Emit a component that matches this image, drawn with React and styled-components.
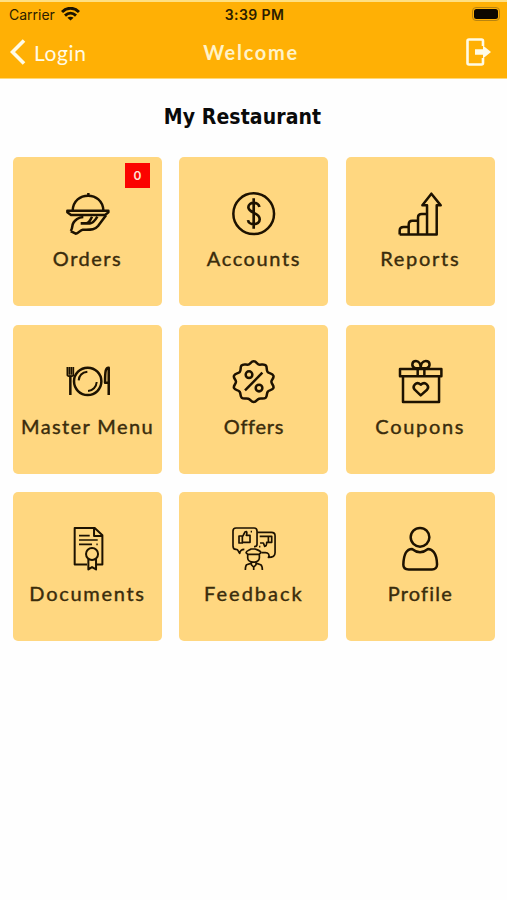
import styled, { createGlobalStyle } from 'styled-components'

const OrdersIcon = () => (
    <Icon>
        <path d="M20 56 C22 -4 110 -4 112 56" />
        <path d="M67 11 V3" />
        <path d="M4 56 H127 V61 L117 69 H15 L4 61 Z" />
        <path d="M14 117 C24 104 12 96 32 82 C40 76 46 75 52 75 M44 94 H60 C68 94 72 86 78 74 M60 94 H72 C82 94 88 84 94 74 M120 70 L96 102 C88 112 78 114 50 113 C42 114 38 124 29 125 L14 117" />
    </Icon>
)
const AccountsIcon = () => (
    <Icon>
        <circle cx="65" cy="65" r="61" />
        <path strokeWidth="8" d="M65 19 V110 M82 45 C80 29 49 28 49 46 C49 65 83 59 83 82 C83 101 50 101 48 84" />
    </Icon>
)
const ReportsIcon = () => (
    <Icon>
        <path d="M2 127 V116 C2 108 8 105 14 105 H29 M29 127 V98 C29 90 34 86 40 86 H57 M57 127 V76 C57 69 62 66 68 66 H84 M84 127 V40 H70 L97 5 L125 40 H113 V127 H2" />
    </Icon>
)
const MenuIcon = () => (
    <Icon>
        <circle cx="65" cy="64" r="41" />
        <path strokeWidth="6" d="M38 61 C39 47 49 37 64 35 M92 66 C91 81 80 92 66 93" />
        <path strokeWidth="5" d="M4 21 V45 C4 50 22 50 22 45 V21 M10 21 V44 M16 21 V44" />
        <path d="M13 46 V105 M128 105 V23 C119 22 117 32 117 68 H127" />
    </Icon>
)
const OffersIcon = () => (
    <Icon>
        <path d="M65 4 C74 4 75 14 83 14 C91 14 97 11 102 17 C106 23 102 31 107 36 C112 41 121 40 124 47 C127 54 118 59 118 65 C118 72 127 77 124 84 C121 91 111 89 107 95 C103 101 106 108 101 113 C95 118 88 114 81 116 C74 118 73 126 65 126 C57 126 56 118 49 116 C42 114 35 118 29 113 C24 108 27 101 23 95 C19 89 9 91 6 84 C3 77 12 72 12 65 C12 59 3 54 6 47 C9 40 18 41 23 36 C28 31 24 23 28 17 C33 11 39 14 47 14 C55 14 56 4 65 4 Z" />
        <circle cx="51" cy="44" r="10" />
        <circle cx="81" cy="84" r="10" />
        <path d="M91 38 L39 91" />
    </Icon>
)
const CouponsIcon = () => (
    <Icon>
        <path d="M3 27 H127 V49 H3 Z M12 49 V126 H120 V49 M56 27 V49 M76 27 V49" />
        <path d="M65 25 H50 C35 20 38 3 51 3 C59 3 65 12 65 25 C65 12 71 3 80 3 C94 3 96 20 82 25 Z" />
        <path d="M65 106 L47 89 C38 78 52 62 65 74 C79 62 93 78 84 89 Z" />
    </Icon>
)
const DocumentsIcon = () => (
    <Icon>
        <path strokeWidth="6" d="M63 112 H26 V3 H86 L109 25 V112 H92 M84 4 V27 H108" />
        <path strokeWidth="5" d="M39 26 H71 M39 39 H95 M39 52 H78 M91 52 H95" />
        <circle cx="78" cy="81" r="18" strokeWidth="6" />
        <path strokeWidth="6" d="M67 96 V127 L78 120 L90 127 V96" />
    </Icon>
)
const FeedbackIcon = () => (
    <Icon>
        <path strokeWidth="5" d="M37 67 C27 67 24 72 23 79 C18 72 19 67 12 67 C6 67 3 63 3 57 V12 C3 6 7 3 12 3 H66 C72 3 75 6 75 12 V52 C75 57 72 59 66 59" />
        <path strokeWidth="5" d="M76 16 H118 C125 16 129 20 129 26 V77 C129 86 121 91 109 91 C114 84 109 77 100 77 H89" />
        <path strokeWidth="5" d="M21 27 H31 V48 H21 Z M32 28 L39 15 C46 10 45 20 43 25 H54 V46 H32 M83 28 H109 V46 H104 C104 52 104 58 98 58 L94 48 H84 M110 28 H119 V46 H110 M56 14 H60 M81 59 H85" />
        <path strokeWidth="5" d="M42 77 C42 72 50 70 57 66 H69 C77 69 86 70 87 77 L81 82 H47 Z M47 83 V93 C48 109 81 109 82 93 V83 M58 105 V113 L65 120 L72 113 V105 M56 109 L44 113 C40 116 40 121 40 129 M74 109 L86 113 C91 116 91 121 91 129 M65 120 V129" />
    </Icon>
)
const ProfileIcon = () => (
    <Icon>
        <circle cx="63" cy="31" r="28" />
        <path d="M39 66 C54 78 72 78 87 66 C99 66 113 77 114 112 C114 121 108 127 99 127 H29 C19 127 13 122 13 113 C14 80 25 66 39 66 Z" />
    </Icon>
)

const tiles = [
    { title: 'Orders', icon: OrdersIcon, spacing: 1.5, count: 0 },
    { title: 'Accounts', icon: AccountsIcon, spacing: 1.6 },
    { title: 'Reports', icon: ReportsIcon, spacing: 1.7 },
    { title: 'Master Menu', icon: MenuIcon, spacing: 1.4 },
    { title: 'Offers', icon: OffersIcon, spacing: 0.7 },
    { title: 'Coupons', icon: CouponsIcon, spacing: 1.7 },
    { title: 'Documents', icon: DocumentsIcon, spacing: 1.7 },
    { title: 'Feedback', icon: FeedbackIcon, spacing: 2 },
    { title: 'Profile', icon: ProfileIcon, spacing: 1.2 },
]

const App = () => {
    return (
        <Screen>
            <GlobalStyle />
            <Header>
                <StatusBar>
                    <Carrier>
                        Carrier
                        <svg width="19" height="14" viewBox="0 0 19 14" fill="none" stroke="#1c1300" strokeWidth="2.9">
                            <path d="M1 5 C6 0 13 0 18 5" />
                            <path d="M4 8.6 C7.4 5.4 11.6 5.4 15 8.6" />
                            <path d="M9.5 13.6 L6.4 10.8 C8.2 9.4 10.8 9.4 12.6 10.8 Z" fill="#1c1300" stroke="none" />
                        </svg>
                    </Carrier>
                    <Time>3:39 PM</Time>
                    <Battery><span /></Battery>
                </StatusBar>
                <NavBar>
                    <Back>
                        <svg width="16" height="26" viewBox="0 0 16 26" fill="none" stroke="#fffbe6" strokeWidth="3.6">
                            <path d="M14 1.5 L2.5 13 L14 24.5" />
                        </svg>
                        Login
                    </Back>
                    <Title>Welcome</Title>
                    <Logout>
                        <svg width="26" height="28" viewBox="0 0 26 28" fill="none" stroke="#fffbe6" strokeWidth="2.6">
                            <path d="M17 8 V3 Q17 1.5 15.5 1.5 H3 Q1.5 1.5 1.5 3 V25 Q1.5 26.5 3 26.5 H15.5 Q17 26.5 17 25 V20" />
                            <path d="M9 11.2 H17 V7.5 L25 14 L17 20.5 V16.8 H9 Z" fill="#fffbe6" stroke="none" />
                        </svg>
                    </Logout>
                </NavBar>
            </Header>
            <Name>My Restaurant</Name>
            <Grid>
                {tiles.map(({ title, icon: TileIcon, spacing, count }) => (
                    <Tile key={title}>
                        {count !== undefined && <Badge>{count}</Badge>}
                        <TileIcon />
                        <Label $spacing={spacing}>{title}</Label>
                    </Tile>
                ))}
            </Grid>
        </Screen>
    )
}

const GlobalStyle = createGlobalStyle`
body{
    margin: 0;
    background-color: #fff;
}
*{
    box-sizing: border-box;
}
`
const Screen = styled.div`
width: 507px;
height: 900px;
overflow: hidden;
background-color: #fefefe;
font-family: Lato, "Liberation Sans", sans-serif;
`
const Header = styled.header`
height: 79px;
background-color: #ffb005;
border-top: 2px solid #ffe082;
border-bottom: 1px solid #ffd978;
`
const StatusBar = styled.div`
height: 24px;
padding: 0 7px 0 9px;
display: grid;
grid-template-columns: 1fr auto 1fr;
align-items: center;
font-family: Inter, "Liberation Sans", sans-serif;
font-size: 14px;
color: #2b1d00;
`
const Carrier = styled.div`
display: flex;
align-items: center;
gap: 6px;
`
const Time = styled.div`
font-weight: 600;
letter-spacing: 0.4px;
`
const Battery = styled.div`
justify-self: end;
width: 28px;
height: 14px;
padding: 1px;
border: 1px solid #b98410;
border-radius: 4px;
& span{
    display: block;
    height: 10px;
    border-radius: 2.5px;
    background-color: #0d0800;
}
`
const NavBar = styled.nav`
height: 52px;
padding: 0 15px 0 10px;
display: grid;
grid-template-columns: 1fr auto 1fr;
align-items: center;
color: #fffbe6;
`
const Back = styled.div`
display: flex;
align-items: center;
gap: 8px;
font-size: 21px;
letter-spacing: 0.6px;
`
const Title = styled.div`
font-size: 20px;
font-weight: 700;
letter-spacing: 1.7px;
color: #fff3c8;
`
const Logout = styled.div`
justify-self: end;
display: flex;
`
const Name = styled.h1`
height: 78px;
margin: 0;
padding-right: 22px;
line-height: 77px;
text-align: center;
font-family: "DejaVu Sans Condensed", "DejaVu Sans", sans-serif;
font-stretch: condensed;
font-size: 21px;
font-weight: 700;
letter-spacing: 0.1px;
color: #0a0a0a;
`
const Grid = styled.main`
padding-left: 13px;
display: grid;
grid-template-columns: repeat(3, 149px);
grid-auto-rows: 149px;
gap: 18.5px 17.4px;
`
const Tile = styled.section`
position: relative;
padding-top: 35px;
display: flex;
flex-direction: column;
align-items: center;
border-radius: 5px;
background-color: #ffd780;
`
const Icon = styled.svg.attrs({ viewBox: '0 0 130 130' })`
width: 43.4px;
height: 43.4px;
flex: none;
overflow: visible;
fill: none;
stroke: #1d1200;
stroke-width: 7.5;
stroke-linejoin: round;
`
const Label = styled.p`
margin: 11px 0 0;
line-height: 24px;
white-space: nowrap;
font-size: 20px;
letter-spacing: ${(props) => props.$spacing}px;
color: #3a2c0c;
-webkit-text-stroke: 0.4px #3a2c0c;
`
const Badge = styled.span`
position: absolute;
top: 6px;
right: 12px;
width: 25px;
height: 25px;
line-height: 25px;
text-align: center;
font-family: Inter, sans-serif;
font-size: 12px;
font-weight: 600;
color: #ffe1d6;
background-color: #fb0300;
`
export default App
